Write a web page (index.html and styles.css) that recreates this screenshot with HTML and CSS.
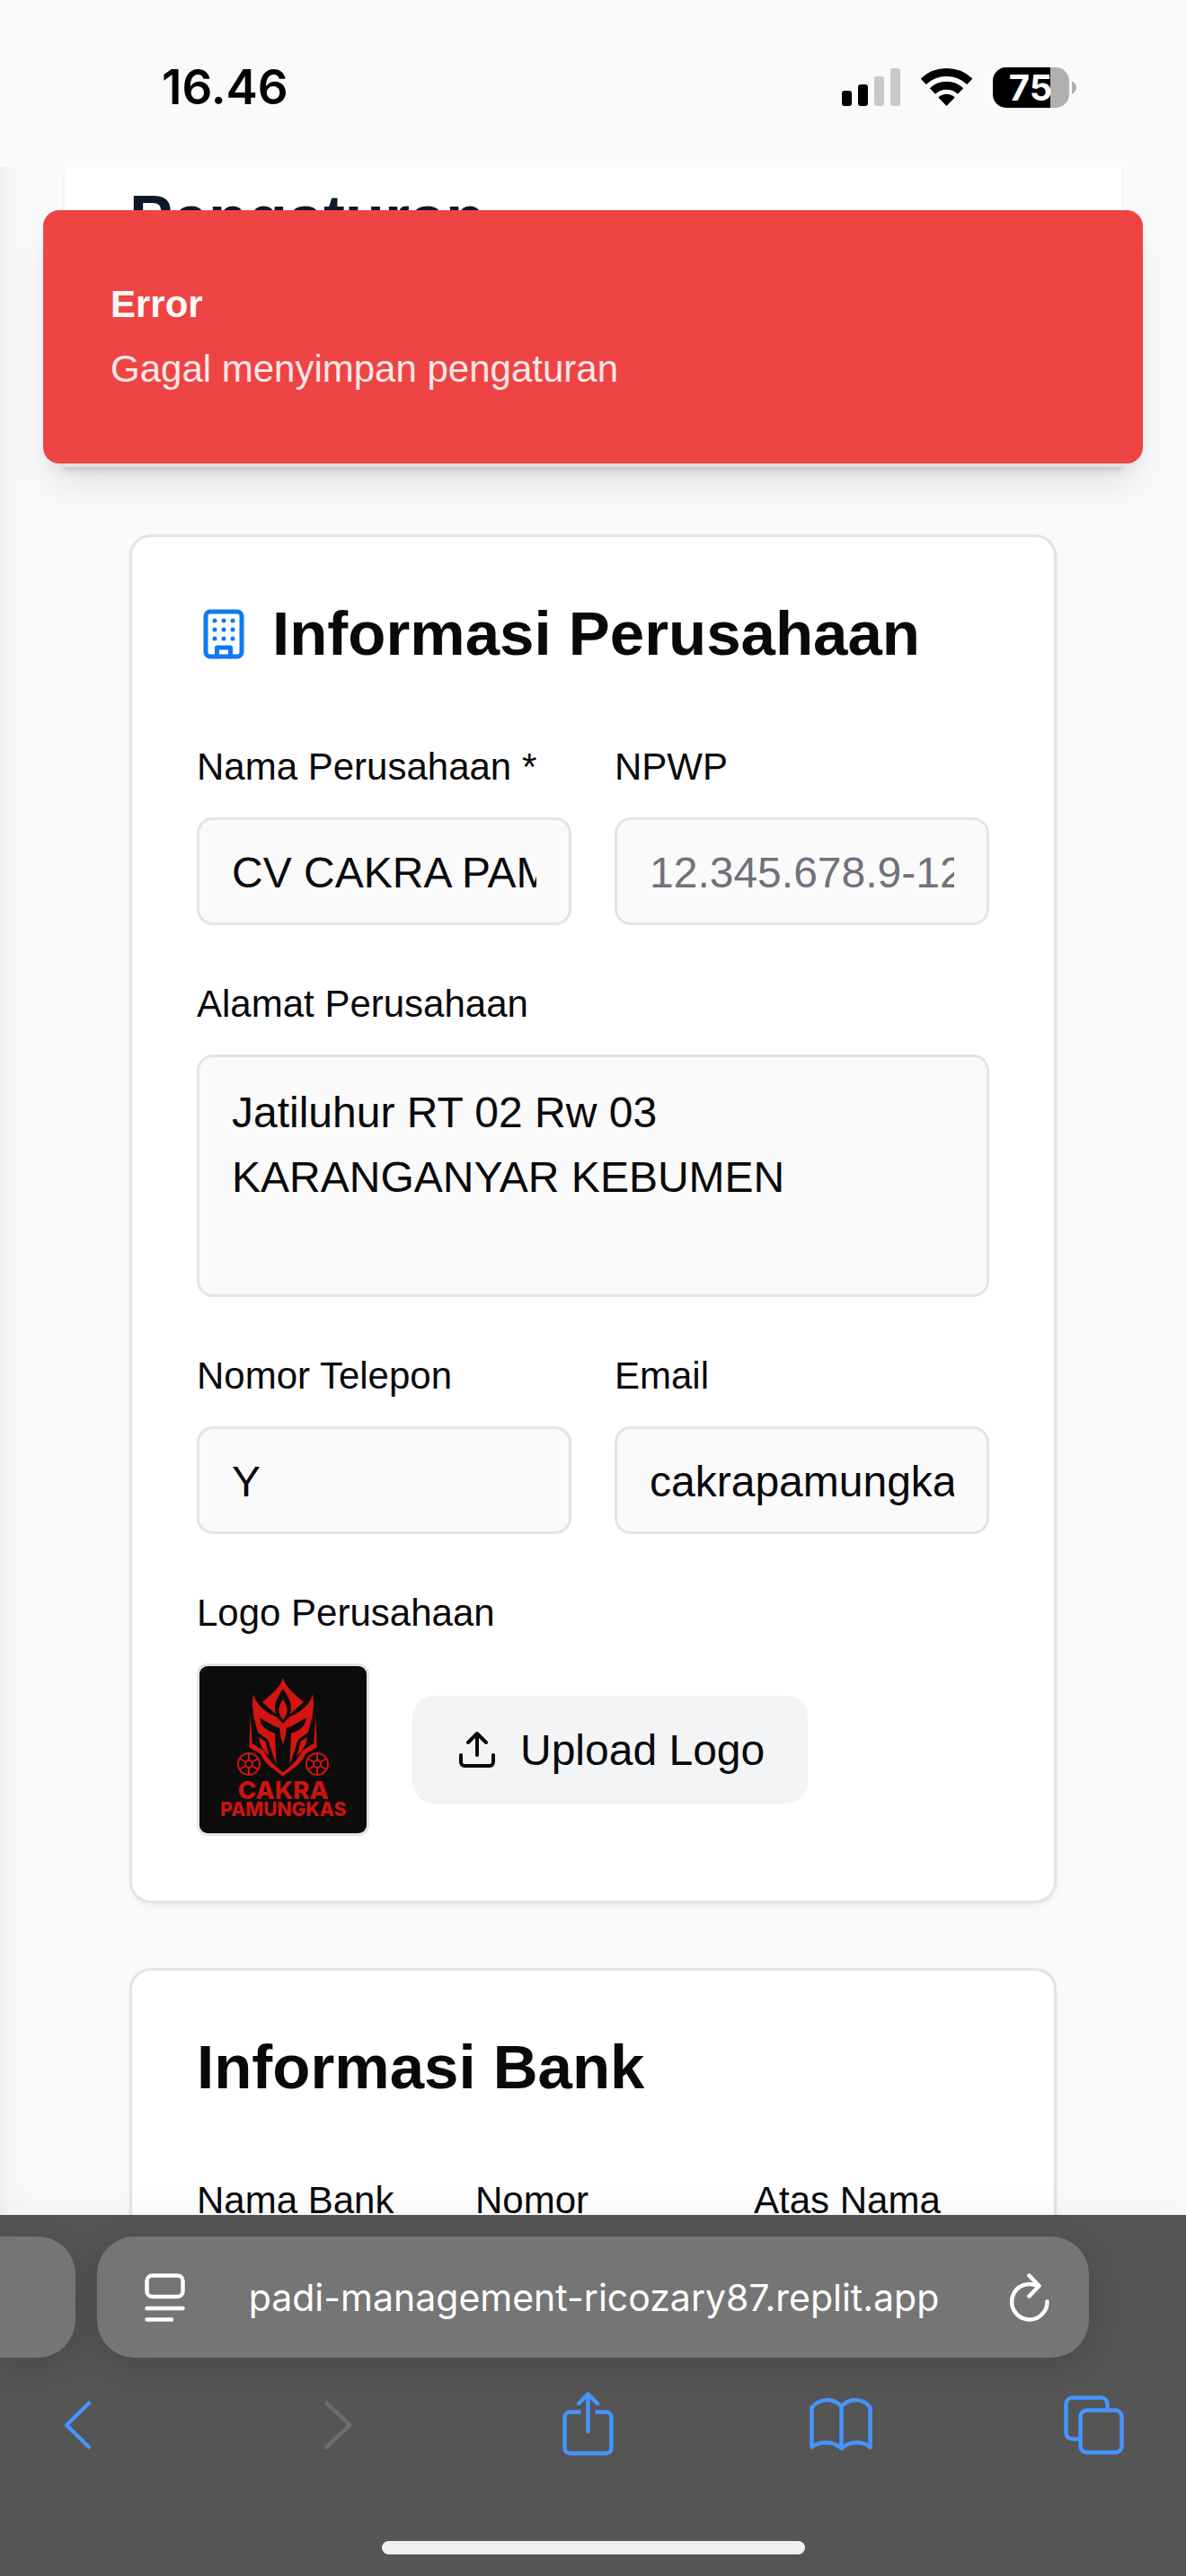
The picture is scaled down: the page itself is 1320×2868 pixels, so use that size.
FILE: index.html
```html
<!DOCTYPE html>
<html lang="id">
<head>
<meta charset="utf-8">
<meta name="viewport" content="width=device-width, initial-scale=1">
<title>Pengaturan</title>
<link rel="stylesheet" href="styles.css">
</head>
<body>
<div class="phone">
  <div class="status-bar">
    <time class="clock">16.46</time>
    <div class="status-icons">
      <svg width="65" height="42" viewBox="0 0 65 42" aria-hidden="true">
        <rect x="0" y="25" width="11" height="17" rx="3"/>
        <rect x="18" y="18" width="11" height="24" rx="3"/>
        <rect x="36" y="9" width="11" height="33" rx="3" fill="#c8c8c8"/>
        <rect x="54" y="0" width="11" height="42" rx="3" fill="#c8c8c8"/>
      </svg>
      <svg width="57" height="42" viewBox="0 0 57 42" aria-hidden="true">
        <g fill="none" stroke="#000" stroke-width="9">
          <path d="M2.7 14.8A37.5 37.5 0 0 1 54.3 14.8"/>
          <path d="M12.9 25.5A22.7 22.7 0 0 1 44.1 25.5"/>
        </g>
        <path d="M28.5 42L19.3 32.4A13.3 13.3 0 0 1 37.7 32.4Z"/>
      </svg>
      <svg width="93" height="45" viewBox="0 0 93 45" aria-hidden="true">
        <defs><clipPath id="charge"><rect width="64" height="45"/></clipPath></defs>
        <rect width="85" height="45" rx="15" fill="#b0b0b0"/>
        <rect width="85" height="45" rx="15" clip-path="url(#charge)"/>
        <path d="M88 15.500C91 16.500 93 19.500 93 22.500S91 28.500 88 29.500Z" fill="#b0b0b0"/>
        <text class="charge" x="42" y="37" text-anchor="middle">75</text>
      </svg>
    </div>
  </div>

  <main class="page">
    <header class="page-header"><h1>Pengaturan</h1></header>

    <div class="cards">
      <section class="card">
        <h2>
          <svg class="building" viewBox="0 0 24 24" aria-hidden="true"><rect width="16" height="20" x="4" y="2" rx="2"/><path d="M9 22v-4h6v4M8 6h.01M16 6h.01M12 6h.01M12 10h.01M12 14h.01M16 10h.01M16 14h.01M8 10h.01M8 14h.01"/></svg>
          Informasi Perusahaan
        </h2>
        <div class="fields">
          <div class="row two">
            <div class="field"><label for="name">Nama Perusahaan *</label><input id="name" type="text" value="CV CAKRA PAMUNGKAS"></div>
            <div class="field"><label for="npwp">NPWP</label><input id="npwp" type="text" placeholder="12.345.678.9-123.000"></div>
          </div>
          <div class="field"><label for="address">Alamat Perusahaan</label><textarea id="address" rows="3">Jatiluhur RT 02 Rw 03
KARANGANYAR KEBUMEN</textarea></div>
          <div class="row two">
            <div class="field"><label for="phone">Nomor Telepon</label><input id="phone" type="text" value="Y"></div>
            <div class="field"><label for="email">Email</label><input id="email" type="text" value="cakrapamungka"></div>
          </div>
          <div class="field">
            <span class="label">Logo Perusahaan</span>
            <div class="logo-row">
              <svg class="logo" viewBox="36 45 558 558" role="img" aria-label="Cakra Pamungkas">
                <rect x="36" y="45" width="558" height="558" fill="#0c0c0c"/>
                <defs>
                  <g id="half">
                    <path d="M315 83C308 112 286 130 246 165L292 206C283 180 290 158 315 121Z"/>
                    <path d="M315 155C306 170 301 182 301 191C301 205 308 215 315 225Z"/>
                    <path d="M216 138C222 168 250 196 292 214L315 236V306C307 284 304 266 304 252L286 245L238 218C238 240 252 256 288 270L293 374C284 350 274 320 264 290L232 268C220 228 207 190 216 138Z"/>
                    <path d="M234 282L257 297L268 346C250 327 237 310 234 282Z"/>
                    <path d="M206 208L202 316L240 338C256 376 288 390 315 413V400C290 380 264 356 250 326L212 303Z"/>
                    <g fill="none" stroke="#d31411" stroke-width="6">
                      <circle cx="201" cy="372" r="36"/>
                      <circle cx="201" cy="372" r="12"/>
                      <path d="M201 336V360M201 384V408M170 354L191 366M211 378L232 390M170 390L191 378M211 366L232 354"/>
                    </g>
                  </g>
                </defs>
                <g fill="#d31411">
                  <use href="#half"/>
                  <use href="#half" transform="matrix(-1 0 0 1 630 0)"/>
                </g>
                <text class="logo-name" x="316" y="490">CAKRA</text>
                <text class="logo-sub" x="316" y="546">PAMUNGKAS</text>
              </svg>
              <button class="upload" type="button">
                <svg viewBox="0 0 24 24" aria-hidden="true"><path d="M21 15v4a2 2 0 0 1-2 2H5a2 2 0 0 1-2-2v-4M17 8l-5-5-5 5M12 3v12"/></svg>
                <span>Upload Logo</span>
              </button>
            </div>
          </div>
        </div>
      </section>

      <section class="card">
        <h2>Informasi Bank</h2>
        <div class="fields">
          <div class="row three">
            <div class="field"><label for="bank">Nama Bank</label><input id="bank" type="text"></div>
            <div class="field"><label for="account">Nomor</label><input id="account" type="text"></div>
            <div class="field"><label for="holder">Atas Nama</label><input id="holder" type="text"></div>
          </div>
        </div>
      </section>
    </div>

    <div class="toast" role="alert">
      <strong>Error</strong>
      <p>Gagal menyimpan pengaturan</p>
    </div>
  </main>

  <footer class="browser">
    <div class="tabs">
      <div class="tab-stub"></div>
      <div class="address">
        <button type="button" aria-label="Menu halaman">
          <svg width="45" height="54" viewBox="0 0 45 54"><rect x="2.500" y="2.500" width="40" height="23.500" rx="6"/><path d="M2.500 39H42.500M2.500 51.500H30"/></svg>
        </button>
        <a class="url" href="#">padi-management-ricozary87.replit.app</a>
        <button type="button" aria-label="Muat ulang">
          <svg width="44" height="60" viewBox="0 0 44 60"><path d="M41.500 34.500A19.700 19.700 0 1 1 31 17.300M21.500 5.500L32.500 17L21.500 28.500"/></svg>
        </button>
      </div>
    </div>
    <nav class="toolbar">
      <button type="button" aria-label="Kembali"><svg viewBox="0 0 72 76"><path d="M49 15.500L24 40L49 64.500"/></svg></button>
      <button class="disabled" type="button" aria-label="Maju"><svg viewBox="0 0 72 76"><path d="M30.500 15.500L56.500 40L30.500 64.500"/></svg></button>
      <button type="button" aria-label="Bagikan"><svg viewBox="0 0 72 76"><path class="butt" d="M30.500 25.500H18.500A6 6 0 0 0 12.500 31.500V65.500A6 6 0 0 0 18.500 71.500H58.500A6 6 0 0 0 64.500 65.500V31.500A6 6 0 0 0 58.500 25.500H46.500"/><path d="M38.500 47V5.500M28 16L38.500 5.500L49 16"/></svg></button>
      <button type="button" aria-label="Markah"><svg viewBox="0 0 72 76"><path d="M37.500 19.500C29 9.500 13 9.500 4.500 20.500V64.500C13 57.500 29 57.500 37.500 66C46 57.500 62 57.500 69.500 64.500V20.500C62 9.500 46 9.500 37.500 19.500V66"/></svg></button>
      <button type="button" aria-label="Tab"><svg viewBox="0 0 72 76"><path class="butt" d="M20.500 55.500H11.500A7 7 0 0 1 4.500 48.500V16.500A7 7 0 0 1 11.500 9.500H43.500A7 7 0 0 1 50.500 16.500V23.500"/><rect x="20.500" y="23.500" width="46" height="47" rx="7"/></svg></button>
    </nav>
    <div class="home-indicator"></div>
  </footer>
</div>
</body>
</html>
```

FILE: styles.css
```css
* {
  box-sizing: border-box;
}

body {
  margin: 0;
  font-family: "Liberation Sans", Arial, sans-serif;
  font-size: 48px;
  line-height: 72px;
  color: #09090b;
}

h1, h2, p {
  margin: 0;
}

svg {
  display: block;
  flex: none;
}

button {
  border: 0;
  padding: 0;
  background: none;
  font: inherit;
  color: inherit;
}

.phone {
  display: flex;
  flex-direction: column;
  height: 100vh;
}

/* Status bar */
.status-bar {
  display: flex;
  flex: none;
  align-items: center;
  justify-content: space-between;
  height: 186px;
  padding: 8px 122px 0 180px;
  background: #fafafa;
}

.clock {
  font-family: Inter, sans-serif;
  font-weight: 600;
  font-size: 53px;
  color: #000;
}

.status-icons {
  display: flex;
  align-items: center;
  gap: 23px;
}

.charge {
  font-family: Inter, sans-serif;
  font-weight: 700;
  font-size: 40px;
  fill: #fff;
}

/* Page */
.page {
  position: relative;
  flex: 1;
  min-height: 0;
  overflow: hidden;
  padding: 0 72px;
  background: linear-gradient(to right, #edeff1, #f5f7f9 12px, #f9fafc 40px);
}

.page-header {
  min-height: 337px;
  padding: 9px 72px;
  border-bottom: 3px solid #e5e7eb;
  background: #fff;
  box-shadow: 0 3px 6px rgba(0, 0, 0, 0.05);
}

h1 {
  font-size: 72px;
  line-height: 96px;
  color: #0f172a;
}

.cards {
  display: flex;
  flex-direction: column;
  gap: 72px;
  padding: 72px;
}

.card {
  padding: 72px;
  border: 3px solid #e4e4e7;
  border-radius: 24px;
  background: #fff;
  box-shadow: 0 3px 6px rgba(0, 0, 0, 0.05);
}

h2 {
  display: flex;
  align-items: center;
  gap: 24px;
  margin-bottom: 72px;
  font-size: 69px;
  line-height: 72px;
}

.building {
  width: 60px;
  height: 60px;
  fill: none;
  stroke: #0f79f6;
  stroke-width: 2;
  stroke-linecap: round;
  stroke-linejoin: round;
}

.fields {
  display: flex;
  flex-direction: column;
  gap: 48px;
}

.row {
  display: grid;
  gap: 48px;
}

.two {
  grid-template-columns: repeat(2, minmax(0, 1fr));
}

.three {
  grid-template-columns: repeat(3, minmax(0, 1fr));
}

.field {
  display: flex;
  flex-direction: column;
  gap: 20px;
}

label,
.label {
  padding-top: 4px;
  font-size: 42px;
  line-height: 72px;
}

input,
textarea {
  display: block;
  width: 100%;
  margin: 0;
  border: 3px solid #e4e4e7;
  border-radius: 18px;
  background: #fafafa;
  font: inherit;
  color: inherit;
}

input {
  height: 120px;
  padding: 2px 36px 0;
}

input::placeholder {
  color: #71717a;
}

textarea {
  padding: 26px 36px 22px;
  resize: none;
  overflow: hidden;
}

.logo-row {
  display: flex;
  align-items: center;
  gap: 48px;
}

.logo {
  width: 192px;
  height: 192px;
  border: 3px solid #e4e4e7;
  border-radius: 12px;
}

.logo-name,
.logo-sub {
  font-family: Inter, sans-serif;
  font-weight: 800;
  fill: #cb1310;
  text-anchor: middle;
}

.logo-name {
  font-size: 83px;
}

.logo-sub {
  font-size: 63px;
}

.upload {
  display: flex;
  align-items: center;
  gap: 24px;
  height: 120px;
  padding: 0 48px;
  border-radius: 24px;
  background: #f3f4f6;
}

.upload span {
  padding-top: 2px;
}

.upload svg {
  width: 48px;
  height: 48px;
  fill: none;
  stroke: currentColor;
  stroke-width: 2;
  stroke-linecap: round;
  stroke-linejoin: round;
}

/* Toast lies over the page */
.toast {
  position: absolute;
  top: 48px;
  left: 48px;
  right: 48px;
  display: flex;
  flex-direction: column;
  gap: 12px;
  padding: 72px;
  border: 3px solid #ef4444;
  border-radius: 18px;
  background: #ef4444;
  font-size: 42px;
  line-height: 60px;
  color: #fafafa;
  box-shadow: 0 30px 45px -9px rgba(0, 0, 0, 0.1), 0 12px 18px -9px rgba(0, 0, 0, 0.1);
}

.toast p {
  opacity: 0.9;
}

/* Browser chrome */
.browser {
  position: relative;
  flex: none;
  padding: 24px 0;
  background: #555;
  box-shadow: 0 0 45px rgba(0, 0, 0, 0.05);
}

.tabs {
  display: flex;
  gap: 24px;
  padding-right: 108px;
}

.tab-stub,
.address {
  height: 135px;
  background: #757575;
  box-shadow: 0 6px 36px rgba(0, 0, 0, 0.16);
}

.tab-stub {
  width: 84px;
  border-radius: 0 42px 42px 0;
}

.address {
  display: flex;
  flex: 1;
  align-items: center;
  justify-content: space-between;
  padding: 0 44px 0 53px;
  border-radius: 42px;
}

.address svg {
  fill: none;
  stroke: #fff;
  stroke-width: 4.5;
  stroke-linecap: round;
  stroke-linejoin: round;
}

.url {
  padding-right: 8px;
  font-family: Inter, sans-serif;
  font-size: 41px;
  color: #fff;
  text-decoration: none;
}

.toolbar {
  display: flex;
  justify-content: space-between;
  padding: 35px 66px 93px 50px;
}

.toolbar svg {
  width: 72px;
  height: 76px;
  fill: none;
  stroke: #4694ff;
  stroke-width: 4.5;
  stroke-linecap: round;
  stroke-linejoin: round;
}

.toolbar .butt {
  stroke-linecap: butt;
}

.toolbar .disabled svg {
  stroke: #6c6c6c;
}

.home-indicator {
  width: 471px;
  height: 15px;
  margin: 0 auto;
  border-radius: 8px;
  background: #efefef;
}
```
